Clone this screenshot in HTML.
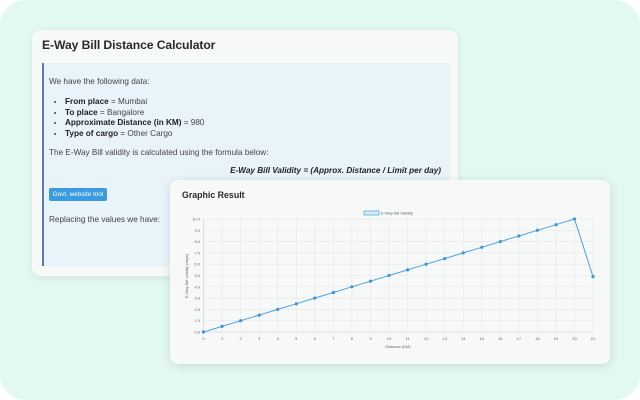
<!DOCTYPE html>
<html><head><meta charset="utf-8">
<style>
html,body{margin:0;padding:0;width:640px;height:400px;overflow:hidden;background:#fff;font-family:"Liberation Sans",sans-serif;}
.bg{position:absolute;left:0;top:0;width:640px;height:400px;background:#e3f9ef;border-radius:26px;}
.card1{position:absolute;left:32px;top:30px;width:426px;height:246px;background:#f7f8f8;border-radius:9px;box-shadow:0 2px 8px rgba(0,0,0,0.08);}
.card1 h1{position:absolute;left:10px;top:8px;margin:0;font-size:12.2px;letter-spacing:-0.1px;font-weight:bold;color:#2a2a2a;}
.box{position:absolute;left:10px;top:33px;width:406px;height:203px;background:#e8f4fa;border-left:2px solid #5b7fb3;font-size:8.2px;color:#444;}
.box p{position:absolute;margin:0;left:5px;}
.box ul{position:absolute;margin:0;left:7px;top:34px;padding-left:14px;line-height:10.6px;}
.box b{color:#222;}
.btn{position:absolute;left:5px;top:125px;width:58px;height:13px;background:#3a9be0;border-radius:2px;color:#fff;font-size:6.4px;display:flex;align-items:center;justify-content:center;}
.card2{position:absolute;left:170px;top:180px;width:440px;height:184px;background:#f7f8f8;border-radius:8px;box-shadow:0 2px 10px rgba(0,0,0,0.12);}
.card2 h2{position:absolute;left:12px;top:10px;margin:0;font-size:8.8px;font-weight:bold;color:#2a2a2a;}
svg{position:absolute;left:0;top:0;}
</style></head><body>
<div class="bg"></div>
<div class="card1">
<h1>E-Way Bill Distance Calculator</h1>
<div class="box">
<p style="top:14px">We have the following data:</p>
<ul>
<li><b>From place</b> = Mumbai</li>
<li><b>To place</b> = Bangalore</li>
<li><b>Approximate Distance (in KM)</b> = 980</li>
<li><b>Type of cargo</b> = Other Cargo</li>
</ul>
<p style="top:85px">The E-Way Bill validity is calculated using the formula below:</p>
<p style="top:103px;left:auto;right:9px;font-style:italic;font-weight:bold;color:#222;">E-Way Bill Validity = (Approx. Distance / Limit per day)</p>
<div class="btn">Govt. website tool</div>
<p style="top:152px">Replacing the values we have:</p>
</div>
</div>
<div class="card2">
<h2>Graphic Result</h2>
</div>
<svg width="640" height="400" font-family="Liberation Sans, sans-serif">
<g stroke="#e6e6e6" stroke-width="0.6">
<line x1="203.5" y1="219" x2="593" y2="219"/><line x1="203.5" y1="230.3" x2="593" y2="230.3"/><line x1="203.5" y1="241.6" x2="593" y2="241.6"/><line x1="203.5" y1="252.9" x2="593" y2="252.9"/><line x1="203.5" y1="264.2" x2="593" y2="264.2"/><line x1="203.5" y1="275.5" x2="593" y2="275.5"/><line x1="203.5" y1="286.8" x2="593" y2="286.8"/><line x1="203.5" y1="298.1" x2="593" y2="298.1"/><line x1="203.5" y1="309.4" x2="593" y2="309.4"/><line x1="203.5" y1="320.7" x2="593" y2="320.7"/>
<line x1="222.1" y1="219" x2="222.1" y2="332"/><line x1="240.6" y1="219" x2="240.6" y2="332"/><line x1="259.2" y1="219" x2="259.2" y2="332"/><line x1="277.7" y1="219" x2="277.7" y2="332"/><line x1="296.3" y1="219" x2="296.3" y2="332"/><line x1="314.8" y1="219" x2="314.8" y2="332"/><line x1="333.4" y1="219" x2="333.4" y2="332"/><line x1="351.9" y1="219" x2="351.9" y2="332"/><line x1="370.5" y1="219" x2="370.5" y2="332"/><line x1="389" y1="219" x2="389" y2="332"/><line x1="407.6" y1="219" x2="407.6" y2="332"/><line x1="426.1" y1="219" x2="426.1" y2="332"/><line x1="444.7" y1="219" x2="444.7" y2="332"/><line x1="463.2" y1="219" x2="463.2" y2="332"/><line x1="481.8" y1="219" x2="481.8" y2="332"/><line x1="500.3" y1="219" x2="500.3" y2="332"/><line x1="518.9" y1="219" x2="518.9" y2="332"/><line x1="537.4" y1="219" x2="537.4" y2="332"/><line x1="556" y1="219" x2="556" y2="332"/><line x1="574.5" y1="219" x2="574.5" y2="332"/><line x1="593" y1="219" x2="593" y2="332"/>
</g>
<line x1="203.5" y1="219" x2="203.5" y2="334" stroke="#ccc" stroke-width="0.6"/>
<line x1="201" y1="332" x2="593" y2="332" stroke="#ccc" stroke-width="0.6"/>
<g font-size="4" fill="#666" text-anchor="end">
<text x="200" y="220.5">10.0</text><text x="200" y="231.8">9.0</text><text x="200" y="243.1">8.0</text><text x="200" y="254.4">7.0</text><text x="200" y="265.7">6.0</text><text x="200" y="277">5.0</text><text x="200" y="288.3">4.0</text><text x="200" y="299.6">3.0</text><text x="200" y="310.9">2.0</text><text x="200" y="322.2">1.0</text><text x="200" y="333.5">0.0</text>
</g>
<g font-size="4" fill="#666" text-anchor="middle">
<text x="203.5" y="340">0</text><text x="222.1" y="340">1</text><text x="240.6" y="340">2</text><text x="259.2" y="340">3</text><text x="277.7" y="340">4</text><text x="296.3" y="340">5</text><text x="314.8" y="340">6</text><text x="333.4" y="340">7</text><text x="351.9" y="340">8</text><text x="370.5" y="340">9</text><text x="389" y="340">10</text><text x="407.6" y="340">11</text><text x="426.1" y="340">12</text><text x="444.7" y="340">13</text><text x="463.2" y="340">14</text><text x="481.8" y="340">15</text><text x="500.3" y="340">16</text><text x="518.9" y="340">17</text><text x="537.4" y="340">18</text><text x="556" y="340">19</text><text x="574.5" y="340">20</text><text x="593" y="340">21</text>
<text x="398" y="348">Distance (KM)</text>
<text transform="translate(188,276) rotate(-90)">E-Way Bill Validity (days)</text>
</g>
<rect x="364" y="211" width="15" height="4" fill="#d6eaf8" stroke="#4aa3e0" stroke-width="0.7"/>
<text x="381" y="214.5" font-size="4" fill="#666">E-Way Bill Validity</text>
<polyline fill="none" stroke="#4aa3e0" stroke-width="1" points="203.5,332 222.1,326.4 240.6,320.7 259.2,315.1 277.7,309.4 296.3,303.8 314.8,298.1 333.4,292.5 351.9,286.8 370.5,281.2 389,275.5 407.6,269.9 426.1,264.2 444.7,258.6 463.2,252.9 481.8,247.3 500.3,241.6 518.9,236 537.4,230.3 556,224.7 574.5,219 593,276.6"/>
<g fill="#3a95dc">
<circle cx="203.5" cy="332" r="1.6"/><circle cx="222.1" cy="326.4" r="1.6"/><circle cx="240.6" cy="320.7" r="1.6"/><circle cx="259.2" cy="315.1" r="1.6"/><circle cx="277.7" cy="309.4" r="1.6"/><circle cx="296.3" cy="303.8" r="1.6"/><circle cx="314.8" cy="298.1" r="1.6"/><circle cx="333.4" cy="292.5" r="1.6"/><circle cx="351.9" cy="286.8" r="1.6"/><circle cx="370.5" cy="281.2" r="1.6"/><circle cx="389" cy="275.5" r="1.6"/><circle cx="407.6" cy="269.9" r="1.6"/><circle cx="426.1" cy="264.2" r="1.6"/><circle cx="444.7" cy="258.6" r="1.6"/><circle cx="463.2" cy="252.9" r="1.6"/><circle cx="481.8" cy="247.3" r="1.6"/><circle cx="500.3" cy="241.6" r="1.6"/><circle cx="518.9" cy="236" r="1.6"/><circle cx="537.4" cy="230.3" r="1.6"/><circle cx="556" cy="224.7" r="1.6"/><circle cx="574.5" cy="219" r="1.6"/><circle cx="593" cy="276.6" r="1.6"/>
</g>
</svg>
</body></html>
